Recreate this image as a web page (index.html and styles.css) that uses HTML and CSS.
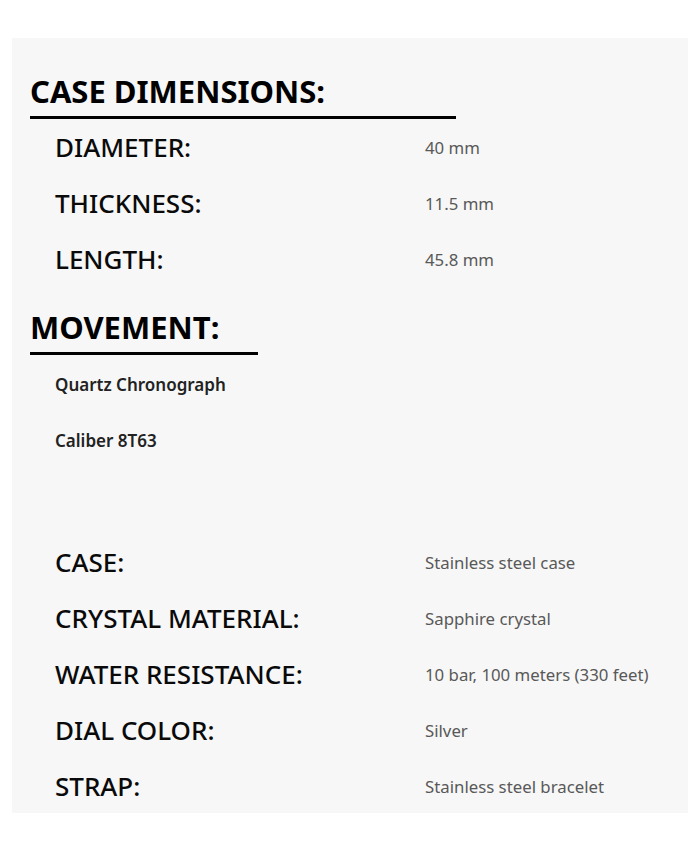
FILE: index.html
```html
<!DOCTYPE html>
<html>
<head>
<meta charset="utf-8">
<link rel="stylesheet" href="styles.css">
</head>
<body>
<div class="panel">
  <h2 class="heading w-case">CASE DIMENSIONS:</h2>
  <div class="row"><span class="label">DIAMETER:</span><span class="value">40 mm</span></div>
  <div class="row"><span class="label">THICKNESS:</span><span class="value">11.5 mm</span></div>
  <div class="row"><span class="label">LENGTH:</span><span class="value">45.8 mm</span></div>
  <h2 class="heading w-move">MOVEMENT:</h2>
  <div class="item">Quartz Chronograph</div>
  <div class="item">Caliber 8T63</div>
  <div class="group">
    <div class="row"><span class="label">CASE:</span><span class="value">Stainless steel case</span></div>
    <div class="row"><span class="label">CRYSTAL MATERIAL:</span><span class="value">Sapphire crystal</span></div>
    <div class="row"><span class="label">WATER RESISTANCE:</span><span class="value">10 bar, 100 meters (330 feet)</span></div>
    <div class="row"><span class="label">DIAL COLOR:</span><span class="value">Silver</span></div>
    <div class="row"><span class="label">STRAP:</span><span class="value">Stainless steel bracelet</span></div>
  </div>
</div>
</body>
</html>
```
FILE: styles.css
```css
html, body {
  margin: 0;
  padding: 0;
  background: #ffffff;
}
body {
  font-family: "Noto Sans", "Open Sans", sans-serif;
  color: #111;
}
.panel {
  margin: 38px 12px 0;
  background: #f7f7f7;
  padding: 13px 18px 0;
  height: 775px;
  box-sizing: border-box;
  overflow: hidden;
}
.heading {
  margin: 0;
  padding: 20px 0 5px;
  font-size: 31px;
  font-weight: 700;
  line-height: 40px;
  color: #000;
  border-bottom: 3px solid #000;
}
.w-case { width: 426px; }
.w-move { width: 228px; }
.row {
  display: grid;
  grid-template-columns: 370px 1fr;
  align-items: center;
  height: 56px;
  padding-left: 25px;
}
.label {
  font-size: 26px;
  font-weight: 500;
  color: #0a0a0a;
  line-height: 30px;
}
.value {
  font-size: 16.8px;
  color: #595959;
  line-height: 20px;
  padding-top: 1px;
}
.item {
  height: 56px;
  box-sizing: border-box;
  padding-top: 3px;
  display: flex;
  align-items: center;
  padding-left: 25px;
  font-size: 17px;
  font-weight: 600;
  color: #222;
}
.group {
  margin-top: 67px;
}
```
